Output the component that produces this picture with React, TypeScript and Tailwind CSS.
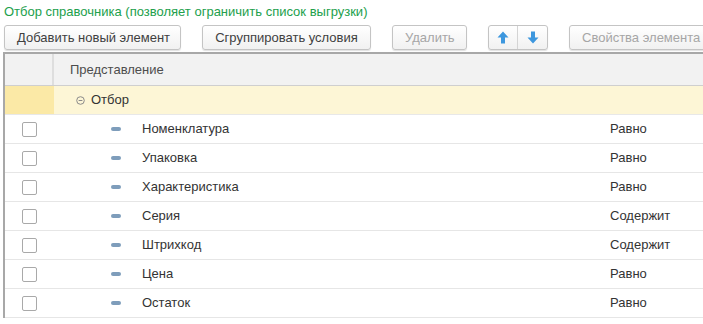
import React from 'react';

const ROWS: { name: string; cond: string }[] = [
  { name: 'Номенклатура', cond: 'Равно' },
  { name: 'Упаковка', cond: 'Равно' },
  { name: 'Характеристика', cond: 'Равно' },
  { name: 'Серия', cond: 'Содержит' },
  { name: 'Штрихкод', cond: 'Содержит' },
  { name: 'Цена', cond: 'Равно' },
  { name: 'Остаток', cond: 'Равно' },
];

const btn =
  'shrink-0 h-[25px] px-3 rounded-[3px] border border-[#c4c4c4] bg-gradient-to-b from-white to-[#f1f1f1] shadow-[0_1px_1px_rgba(0,0,0,0.12)] text-[13px] leading-none whitespace-nowrap';

const Arrow: React.FC<{ down?: boolean }> = ({ down }) => (
  <svg width="12" height="13" viewBox="0 0 12 13" className={down ? 'rotate-180' : ''}>
    <path d="M6 0.5 L11.5 6.5 L8 6.5 L8 12.5 L4 12.5 L4 6.5 L0.5 6.5 Z" fill="#3d97de" />
  </svg>
);

export default function App() {
  return (
    <div
      className="w-[703px] h-[324px] overflow-hidden bg-white text-[#333] text-[13px]"
      style={{ fontFamily: '"Liberation Sans", Arial, sans-serif' }}
    >
      <div className="pl-[4px] pt-[4px] h-[24px] text-[#22a04c] leading-[16px]">
        Отбор справочника (позволяет ограничить список выгрузки)
      </div>

      {/* панель кнопок */}
      <div className="flex items-center pl-[4px] h-[26px]">
        <button className={`${btn} w-[177px] text-[#404040]`}>Добавить новый элемент</button>
        <button className={`${btn} w-[169px] ml-[21px] text-[#404040]`}>Сгруппировать условия</button>
        <button className={`${btn} w-[75px] ml-[21px] text-[#a6a6a6]`}>Удалить</button>
        <div className="shrink-0 flex ml-[21px] h-[25px] rounded-[3px] border border-[#c4c4c4] bg-gradient-to-b from-white to-[#f1f1f1] shadow-[0_1px_1px_rgba(0,0,0,0.12)]">
          <div className="w-[29px] flex items-center justify-center border-r border-[#d4d4d4]">
            <Arrow />
          </div>
          <div className="w-[29px] flex items-center justify-center">
            <Arrow down />
          </div>
        </div>
        <button className={`${btn} w-[170px] ml-[21px] text-[#a6a6a6] text-left pl-[12px]`}>
          Свойства элемента п
        </button>
      </div>

      {/* таблица */}
      <div className="ml-[3px] mt-[2px] border-t-2 border-l-2 border-[#a8a8a8]">
        <div className="flex h-[32px] bg-[#f2f2f2] border-b border-[#cfcfcf]">
          <div className="w-[49px] border-r-2 border-[#dedede]" />
          <div className="flex items-center pl-[16px] text-[#4d4d4d]">Представление</div>
        </div>
        <div className="flex h-[29px] bg-[#fdf6d6] border-b border-[#e8e8e8]">
          <div className="w-[49px] bg-[#fbe9a6]" />
          <div className="flex items-center pl-[22px]">
            <svg width="9" height="9" viewBox="0 0 9 9">
              <circle cx="4.5" cy="4.5" r="3.8" fill="none" stroke="#8a8a8a" strokeWidth="1" />
              <line x1="2.6" y1="4.5" x2="6.4" y2="4.5" stroke="#8a8a8a" strokeWidth="1" />
            </svg>
            <span className="ml-[6px]">Отбор</span>
          </div>
        </div>
        {ROWS.map((r) => (
          <div key={r.name} className="flex h-[29px] items-center border-b border-[#e6e6e6]">
            <div className="w-[49px] flex items-center pl-[17px]">
              <div className="w-[15px] h-[15px] rounded-[2px] border border-[#a9a9a9] bg-white" />
            </div>
            <div className="w-[556px] flex items-center pl-[57px]">
              <div className="w-[10px] h-[4px] rounded-[2px] bg-[#7e9dbb]" />
              <span className="ml-[21px]">{r.name}</span>
            </div>
            <div>{r.cond}</div>
          </div>
        ))}
      </div>
    </div>
  );
}
